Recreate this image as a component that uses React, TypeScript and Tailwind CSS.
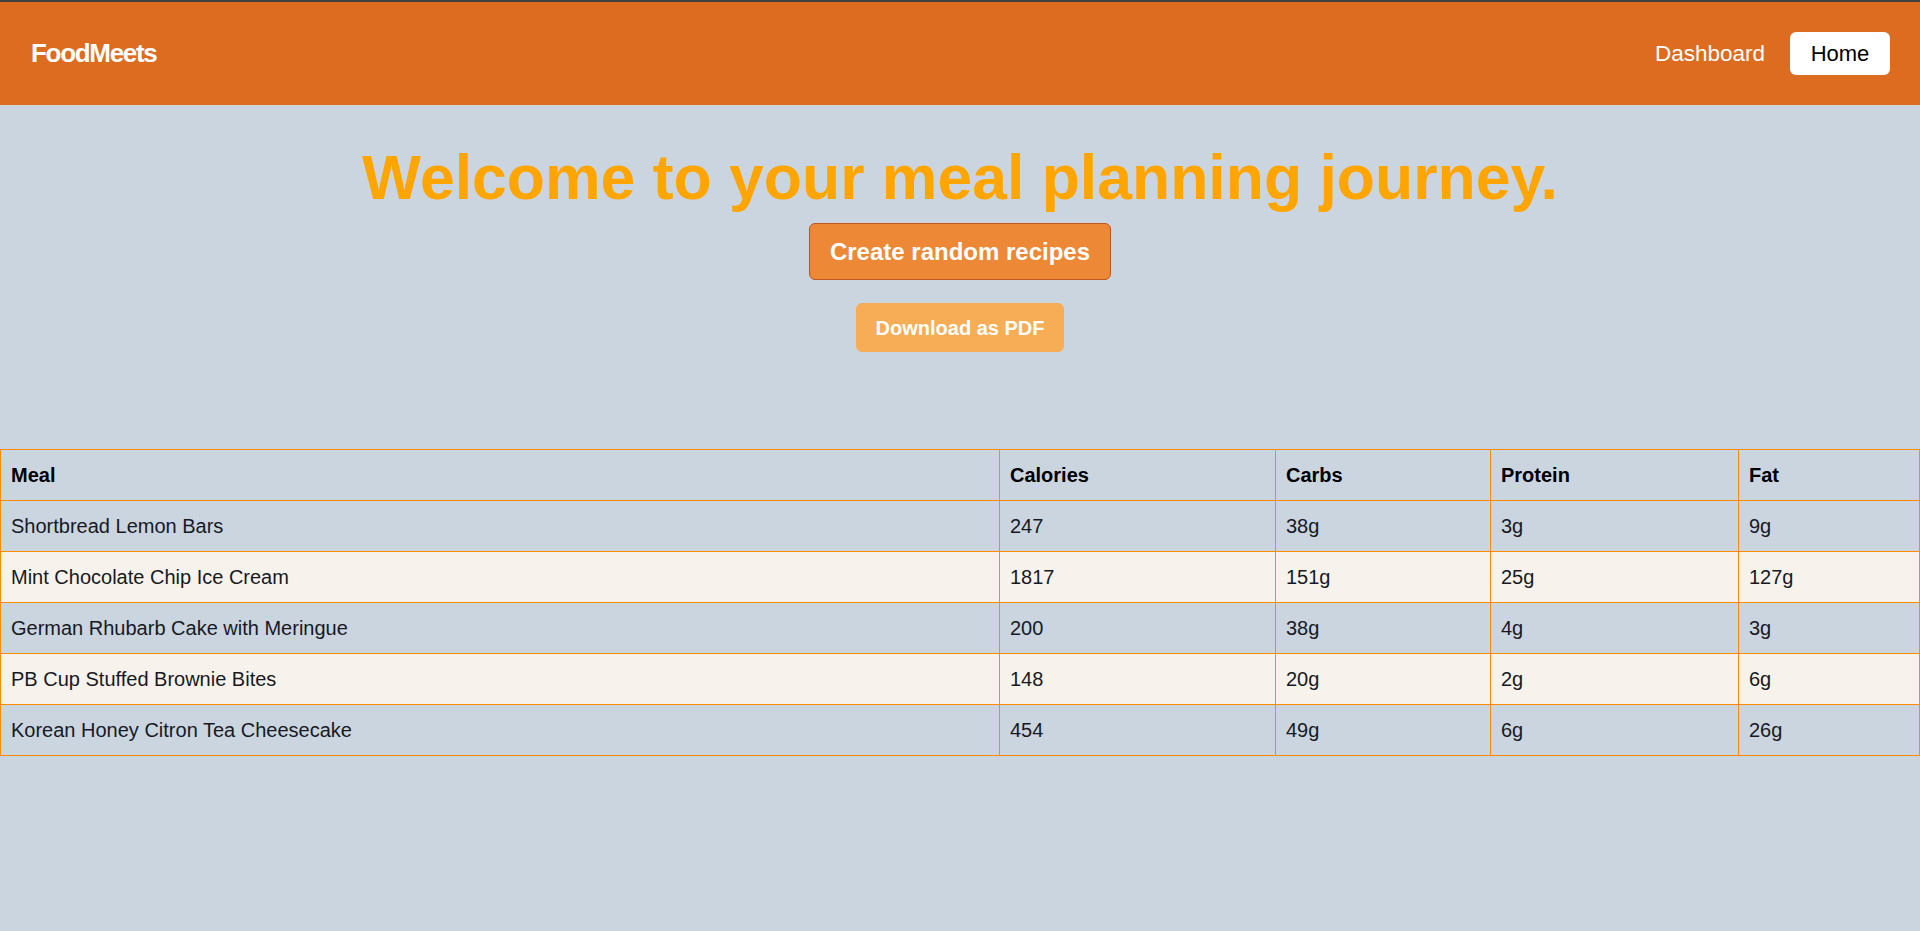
import React from "react";

const meals = [
  { name: "Shortbread Lemon Bars", calories: "247", carbs: "38g", protein: "3g", fat: "9g" },
  { name: "Mint Chocolate Chip Ice Cream", calories: "1817", carbs: "151g", protein: "25g", fat: "127g" },
  { name: "German Rhubarb Cake with Meringue", calories: "200", carbs: "38g", protein: "4g", fat: "3g" },
  { name: "PB Cup Stuffed Brownie Bites", calories: "148", carbs: "20g", protein: "2g", fat: "6g" },
  { name: "Korean Honey Citron Tea Cheesecake", calories: "454", carbs: "49g", protein: "6g", fat: "26g" },
];

export default function App() {
  return (
    <div className="min-h-screen bg-[#cbd5e0] font-['Liberation_Sans',Arial,sans-serif]">
      <header className="flex h-[105px] items-center justify-between border-t-2 border-[#404040] bg-[#dd6b20] pl-[31px] pr-[30px]">
        <span className="text-[26px] font-bold tracking-[-1.3px] text-white">FoodMeets</span>
        <nav className="flex items-center gap-[25px]">
          <a href="#" className="text-[22.5px] text-white">
            Dashboard
          </a>
          <a href="#" className="flex h-[43px] w-[100px] items-center justify-center rounded-md bg-white text-[22px] text-black">
            Home
          </a>
        </nav>
      </header>

      <main className="flex flex-col items-center">
        <h1 className="mt-[35px] text-[62.5px] font-bold leading-[74px] text-[#ffa500]">
          Welcome to your meal planning journey.
        </h1>
        <button className="mt-[9px] h-[57px] rounded-md border border-[#c05621] bg-[#ed8936] px-5 text-[24px] font-bold text-white">
          Create random recipes
        </button>
        <button className="mt-[23px] h-[49px] rounded-md bg-[#f6ad55] px-5 text-[20px] font-bold text-white">
          Download as PDF
        </button>
      </main>

      <table className="mt-[97px] w-full table-fixed border-collapse text-left text-[20px]">
        <colgroup>
          <col className="w-[999px]" />
          <col className="w-[276px]" />
          <col className="w-[215px]" />
          <col className="w-[248px]" />
          <col />
        </colgroup>
        <thead>
          <tr className="h-[51px]">
            {["Meal", "Calories", "Carbs", "Protein", "Fat"].map((h) => (
              <th key={h} className="border border-[#ff8c00] px-[10px] font-bold text-black">
                {h}
              </th>
            ))}
          </tr>
        </thead>
        <tbody className="text-[#171923]">
          {meals.map((m, i) => (
            <tr key={m.name} className={`h-[51px] ${i % 2 === 1 ? "bg-[#f7f3ec]" : ""}`}>
              <td className="border border-[#ff8c00] px-[10px]">{m.name}</td>
              <td className="border border-[#ff8c00] px-[10px]">{m.calories}</td>
              <td className="border border-[#ff8c00] px-[10px]">{m.carbs}</td>
              <td className="border border-[#ff8c00] px-[10px]">{m.protein}</td>
              <td className="border border-[#ff8c00] px-[10px]">{m.fat}</td>
            </tr>
          ))}
        </tbody>
      </table>
    </div>
  );
}
